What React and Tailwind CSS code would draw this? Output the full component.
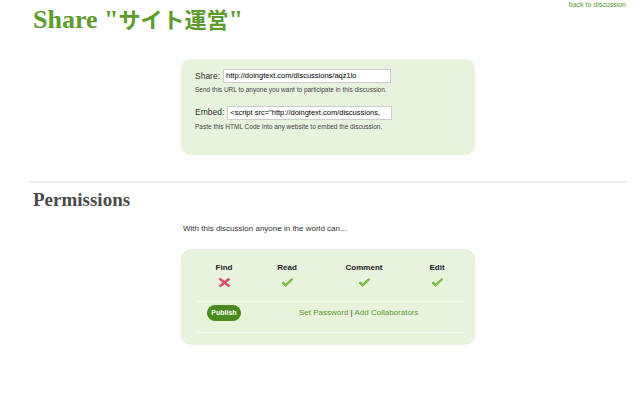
export default function App() {
  const perms = [
    { name: 'Find', ok: false, w: 'w-[54px]' },
    { name: 'Read', ok: true, w: 'w-[72px]' },
    { name: 'Comment', ok: true, w: 'w-[82px]' },
    { name: 'Edit', ok: true, w: 'w-[64px]' },
  ]

  return (
    <div className="relative w-[640px] h-[394px] bg-white font-['Liberation_Sans',sans-serif] text-[#333]">
      <a href="#" className="absolute right-[14px] top-0 text-[7px] leading-[9px] text-[#4f9a2d]">back to discussion</a>

      <h1 className="pl-[33px] pt-[5px] text-[26px] leading-[30px] font-bold text-[#5c9b2c] font-['Liberation_Serif','Noto_Sans_CJK_JP',serif]">
        Share "<span className="text-[22px]">サイト運営</span>"
      </h1>

      {/* Share box */}
      <div className="ml-[181px] mt-[23px] w-[294px] h-[96px] rounded-[10px] bg-[#e8f3de] pl-[14px] pt-[10px]">
        <div className="flex items-center gap-[3px]">
          <span className="text-[8.5px]">Share:</span>
          <div className="w-[168px] h-[14px] bg-white border border-[#ccc] px-[2px] text-[7.5px] leading-[12px] text-black overflow-hidden whitespace-nowrap">
            http://doingtext.com/discussions/aqz1lo
          </div>
        </div>
        <p className="mt-[2px] text-[6.5px] text-[#444]">Send this URL to anyone you want to participate in this discussion.</p>

        <div className="mt-[11px] flex items-center gap-[3px]">
          <span className="text-[8.5px]">Embed:</span>
          <div className="w-[165px] h-[14px] bg-white border border-[#ccc] px-[2px] text-[7.5px] leading-[12px] text-black overflow-hidden whitespace-nowrap">
            &lt;script src="http://doingtext.com/discussions,
          </div>
        </div>
        <p className="mt-[2px] text-[6.5px] text-[#444]">Paste this HTML Code into any website to embed the discussion.</p>
      </div>

      <div className="ml-[30px] mt-[26px] w-[596px] h-[2px] bg-[#eeeeee]" />

      <h2 className="pl-[33px] mt-[7px] text-[19px] leading-[20px] font-bold text-[#4a4a4a] font-['Liberation_Serif',serif]">
        Permissions
      </h2>

      <p className="ml-[183px] mt-[14px] text-[8px] leading-[10px]">With this discussion anyone in the world can...</p>

      {/* Permissions box */}
      <div className="ml-[181px] mt-[15px] w-[294px] h-[96px] rounded-[10px] bg-[#e8f3de] pl-[16px] pr-[12px] pt-[14px]">
        <div className="flex">
          {perms.map(p => (
            <div key={p.name} className={`${p.w} shrink-0 flex flex-col items-center`}>
              <span className="text-[8px] leading-[10px] font-bold text-[#222]">{p.name}</span>
              <svg width="13" height="11" viewBox="0 0 13 11" className="mt-[4px]">
                {p.ok ? (
                  <path d="M1 6 L4.5 9.5 L12 2.5 L10.5 1.5 L4.5 7 L2.5 4.8 Z" fill="#82c444" stroke="#5a9a2a" strokeWidth="0.6" strokeLinejoin="round" />
                ) : (
                  <path d="M2 1 L6.5 4 L10.5 1 L12 2.5 L8 5.5 L12 8.5 L10.5 10 L6.5 7 L2.5 10 L1 8.5 L5 5.5 L1 2.5 Z" fill="#e0506a" stroke="#c83450" strokeWidth="0.5" strokeLinejoin="round" />
                )}
              </svg>
            </div>
          ))}
        </div>
        <div className="mt-[13px] h-px bg-[#f6faf2]" />
        <div className="flex items-start pt-[3px] h-[30px]">
          <button className="ml-[10px] w-[34px] h-[16px] rounded-full bg-[#4b8a1c] text-white text-[7px] font-bold">Publish</button>
          <div className="ml-[58px] text-[8px] leading-[16px] text-[#5a9a2a]">
            <a href="#">Set Password</a>
            <span className="text-[#333]"> | </span>
            <a href="#">Add Collaborators</a>
          </div>
        </div>
        <div className="h-px bg-[#f6faf2]" />
      </div>
    </div>
  )
}
